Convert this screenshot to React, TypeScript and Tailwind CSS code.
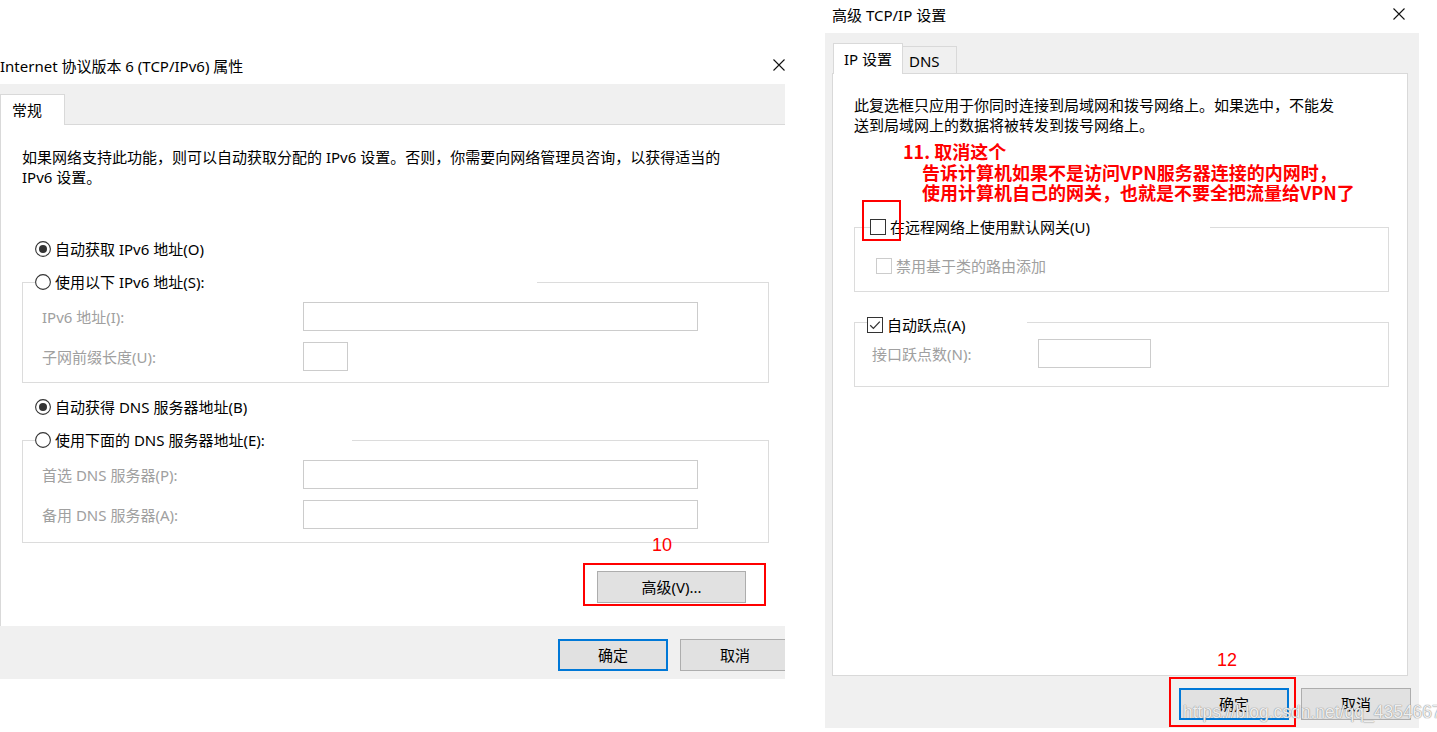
import type { ReactNode } from "react";

const FONT = "[font-family:'Noto_Sans','Noto_Sans_CJK_SC',sans-serif]";

function CloseIcon() {
  return (
    <svg width="12" height="12" viewBox="0 0 12 12" className="mt-[3px] shrink-0">
      <path d="M0.5 0.5 L11.5 11.5 M11.5 0.5 L0.5 11.5" stroke="#111" strokeWidth="1.1" />
    </svg>
  );
}

function Radio({ checked, label }: { checked?: boolean; label: string }) {
  return (
    <span className="flex items-center gap-[4px] h-[20px] whitespace-nowrap">
      <svg width="16" height="16" viewBox="0 0 16 16" className="shrink-0">
        <circle cx="8" cy="8" r="7.4" fill="#fff" stroke="#333" strokeWidth="1.1" />
        {checked && <circle cx="8" cy="8" r="4" fill="#333" />}
      </svg>
      <span>{label}</span>
    </span>
  );
}

function Checkbox({
  checked,
  disabled,
  label,
  className = "",
}: {
  checked?: boolean;
  disabled?: boolean;
  label: string;
  className?: string;
}) {
  const stroke = disabled ? "#cccccc" : "#333";
  return (
    <span className={`flex items-center gap-[4px] h-[20px] whitespace-nowrap ${className}`}>
      <svg width="16" height="16" viewBox="0 0 16 16" className="shrink-0">
        <rect x="0.5" y="0.5" width="15" height="15" fill="#fff" stroke={stroke} />
        {checked && (
          <path d="M3.2 8.2 L6.4 11.4 L12.8 4.6" fill="none" stroke="#333" strokeWidth="1.3" />
        )}
      </svg>
      <span className={disabled ? "text-[#a0a0a0]" : ""}>{label}</span>
    </span>
  );
}

function GroupBox({
  legend,
  legendWidth,
  legendIndent,
  width,
  className,
  children,
}: {
  legend: ReactNode;
  legendWidth: string;
  legendIndent: string;
  width: string;
  className: string;
  children: ReactNode;
}) {
  return (
    <fieldset className={`${width} border border-[#dcdcdc] ${className}`}>
      <legend className={`${legendWidth} ${legendIndent} h-[20px] p-0 bg-white`}>{legend}</legend>
      {children}
    </fieldset>
  );
}

function FieldRow({
  label,
  labelWidth,
  inputWidth,
  className,
}: {
  label: string;
  labelWidth: string;
  inputWidth: string;
  className: string;
}) {
  return (
    <div className={`flex items-center h-[29px] ${className}`}>
      <span className={`${labelWidth} text-[#a0a0a0] whitespace-nowrap`}>{label}</span>
      <div className={`${inputWidth} h-[29px] border border-[#cccccc] bg-white`} />
    </div>
  );
}

function Button({ primary, children }: { primary?: boolean; children: ReactNode }) {
  return (
    <div
      className={`w-[110px] h-[32px] shrink-0 bg-[#e1e1e1] flex items-center justify-center ${
        primary ? "border-2 border-[#0078d7]" : "border border-[#adadad]"
      }`}
    >
      {children}
    </div>
  );
}

function Ipv6Dialog() {
  return (
    <div className="relative w-[785px] h-[679px] shrink-0 flex flex-col overflow-hidden">
      {/* Title bar */}
      <div className="h-[84px] flex items-start justify-between pt-[56px] bg-white">
        <span className="whitespace-nowrap">Internet 协议版本 6 (TCP/IPv6) 属性</span>
        <CloseIcon />
      </div>

      <div className="flex-1 bg-[#f0f0f0] flex flex-col">
        {/* Tabs */}
        <div className="h-[40px] flex items-end">
          <div className="relative z-10 -mb-px w-[65px] h-[31px] bg-white border border-b-0 border-[#d9d9d9] pl-[11px] pt-[5px]">
            常规
          </div>
        </div>

        {/* Panel */}
        <div className="h-[502px] bg-white border-t border-l border-[#d9d9d9] pl-[21px] pt-[22px]">
          <p className="whitespace-nowrap">
            如果网络支持此功能，则可以自动获取分配的 IPv6 设置。否则，你需要向网络管理员咨询，以获得适当的
            <br />
            IPv6 设置。
          </p>

          <div className="mt-[52px] ml-[13px]">
            <Radio checked label="自动获取 IPv6 地址(O)" />
          </div>

          <GroupBox
            width="w-[747px]"
            className="mt-[13px] pb-[11px]"
            legendWidth="w-[502px]"
            legendIndent="ml-[12px]"
            legend={<Radio label="使用以下 IPv6 地址(S):" />}
          >
            <FieldRow className="mt-[10px] pl-[19px]" labelWidth="w-[261px]" inputWidth="w-[395px]" label="IPv6 地址(I):" />
            <FieldRow className="mt-[11px] pl-[19px]" labelWidth="w-[261px]" inputWidth="w-[45px]" label="子网前缀长度(U):" />
          </GroupBox>

          <div className="mt-[14px] ml-[13px]">
            <Radio checked label="自动获得 DNS 服务器地址(B)" />
          </div>

          <GroupBox
            width="w-[747px]"
            className="mt-[13px] pb-[13px]"
            legendWidth="w-[317px]"
            legendIndent="ml-[12px]"
            legend={<Radio label="使用下面的 DNS 服务器地址(E):" />}
          >
            <FieldRow className="mt-[10px] pl-[19px]" labelWidth="w-[261px]" inputWidth="w-[395px]" label="首选 DNS 服务器(P):" />
            <FieldRow className="mt-[11px] pl-[19px]" labelWidth="w-[261px]" inputWidth="w-[395px]" label="备用 DNS 服务器(A):" />
          </GroupBox>

          <div className="mt-[28px] ml-[575px] w-[149px] h-[32px] bg-[#e1e1e1] border border-[#adadad] flex items-center justify-center">
            高级(V)...
          </div>
        </div>

        {/* Footer */}
        <div className="flex-1 flex justify-end items-start gap-[12px] pt-[13px] mr-[-5px]">
          <Button primary>确定</Button>
          <Button>取消</Button>
        </div>
      </div>

      {/* annotation */}
      <span className="absolute left-[652px] top-[534px] text-[18px] leading-[22px] text-[#ff0000] [font-family:'Liberation_Sans',sans-serif]">
        10
      </span>
      <div className="absolute left-[583px] top-[563px] w-[183px] h-[43px] border-2 border-[#ff0000]" />
    </div>
  );
}

function AdvancedDialog() {
  return (
    <div className="relative ml-[40px] w-[594px] h-[728px] shrink-0 flex flex-col">
      {/* Title bar */}
      <div className="h-[33px] flex items-start justify-between pt-[5px] pl-[7px] pr-[14px] bg-white">
        <span className="whitespace-nowrap">高级 TCP/IP 设置</span>
        <CloseIcon />
      </div>

      <div className="flex-1 bg-[#f0f0f0] flex flex-col pl-[7px] pr-[11px]">
        {/* Tabs */}
        <div className="h-[40px] flex items-end pl-[1px]">
          <div className="relative z-10 -mb-px w-[70px] h-[31px] bg-white border border-b-0 border-[#d9d9d9] pl-[10px] pt-[5px] whitespace-nowrap">
            IP 设置
          </div>
          <div className="w-[54px] h-[27px] bg-[#f0f0f0] border border-l-0 border-b-0 border-[#d9d9d9] pl-[6px] pt-[4px]">
            DNS
          </div>
        </div>

        {/* Panel */}
        <div className="h-[603px] bg-white border border-[#d9d9d9] pl-[21px] pt-[21px]">
          <p className="whitespace-nowrap">
            此复选框只应用于你同时连接到局域网和拨号网络上。如果选中，不能发
            <br />
            送到局域网上的数据将被转发到拨号网络上。
          </p>

          <GroupBox
            width="w-[535px]"
            className="mt-[82px] pb-[15px]"
            legendWidth="w-[340px]"
            legendIndent="ml-[15px]"
            legend={<Checkbox label="在远程网络上使用默认网关(U)" />}
          >
            <div className="mt-[19px] pl-[21px]">
              <Checkbox disabled label="禁用基于类的路由添加" />
            </div>
          </GroupBox>

          <GroupBox
            width="w-[535px]"
            className="mt-[20px] pb-[18px]"
            legendWidth="w-[160px]"
            legendIndent="ml-[12px]"
            legend={<Checkbox checked label="自动跃点(A)" className="relative top-[3px]" />}
          >
            <FieldRow className="mt-[7px] pl-[17px]" labelWidth="w-[166px]" inputWidth="w-[113px]" label="接口跃点数(N):" />
          </GroupBox>
        </div>

        {/* Footer */}
        <div className="flex-1 flex justify-end items-start gap-[12px] pt-[12px] mr-[-3px]">
          <Button primary>确定</Button>
          <Button>取消</Button>
        </div>
      </div>

      {/* annotations */}
      <div className="absolute left-[78px] top-[141px] text-[18px] leading-[20.5px] font-bold text-[#ff0000] whitespace-nowrap [font-family:'Noto_Sans_CJK_SC',sans-serif]">
        <div>11. 取消这个</div>
        <div className="pl-[19px]">告诉计算机如果不是访问VPN服务器连接的内网时，</div>
        <div className="pl-[19px]">使用计算机自己的网关，也就是不要全把流量给VPN了</div>
      </div>
      <div className="absolute left-[37px] top-[200px] w-[39px] h-[41px] border-2 border-[#ff0000]" />

      <span className="absolute left-[392px] top-[649px] text-[18px] leading-[22px] text-[#ff0000] [font-family:'Liberation_Sans',sans-serif]">
        12
      </span>
      <div className="absolute left-[344px] top-[677px] w-[127px] h-[50px] border-2 border-[#ff0000]" />

      <span className="absolute left-[358px] top-[700px] text-[17.5px] leading-[24px] text-white/85 whitespace-nowrap [font-family:'Liberation_Sans',sans-serif] [text-shadow:0_0_1px_#8a8a8a,0_0_1px_#8a8a8a]">
        https://blog.csdn.net/qq_43546676
      </span>
    </div>
  );
}

export default function App() {
  return (
    <div
      className={`w-[1437px] h-[732px] bg-white flex items-start overflow-hidden text-[15px] leading-[20px] text-black ${FONT}`}
    >
      <Ipv6Dialog />
      <AdvancedDialog />
    </div>
  );
}
